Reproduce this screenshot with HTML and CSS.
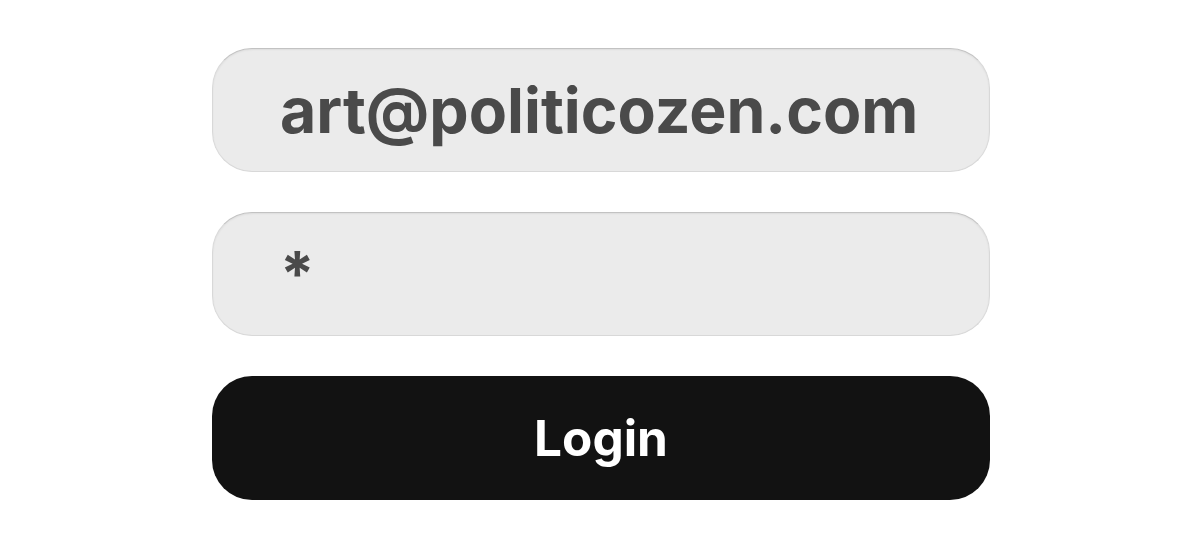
FILE: index.html
```html
<!DOCTYPE html>
<html>
<head>
<meta charset="utf-8">
<link rel="stylesheet" href="styles.css">
</head>
<body>
<form class="login">
  <div class="field"><span class="value email">art@politicozen.com</span></div>
  <div class="field"><span class="value pass">*</span></div>
  <button type="button" class="btn">Login</button>
</form>
</body>
</html>
```
FILE: styles.css
```css
html, body {
  margin: 0;
  padding: 0;
  background: #ffffff;
}
body {
  font-family: Inter, "Noto Sans", sans-serif;
  width: 1200px;
  height: 549px;
}
.login {
  display: flex;
  flex-direction: column;
  gap: 40px;
  width: 778px;
  padding-top: 48px;
  margin-left: 212px;
}
.field {
  box-sizing: border-box;
  height: 124px;
  border-radius: 40px;
  background: #ebebeb;
  border: 1px solid #d8d8d8;
  border-top-color: #c2c2c2;
  box-shadow: inset 0 1px 2px rgba(0, 0, 0, 0.06);
  display: flex;
  align-items: center;
  padding-left: 67px;
  color: #4a4a4a;
}
.value {
  font-weight: 700;
  font-size: 62.5px;
  letter-spacing: 0;
}
.pass {
  font-size: 62px;
  margin-top: -2px;
}
.btn {
  height: 124px;
  border: none;
  border-radius: 40px;
  background: #121212;
  color: #ffffff;
  font-family: Inter, "Noto Sans", sans-serif;
  font-weight: 700;
  font-size: 49.5px;
  padding: 0;
}
```
